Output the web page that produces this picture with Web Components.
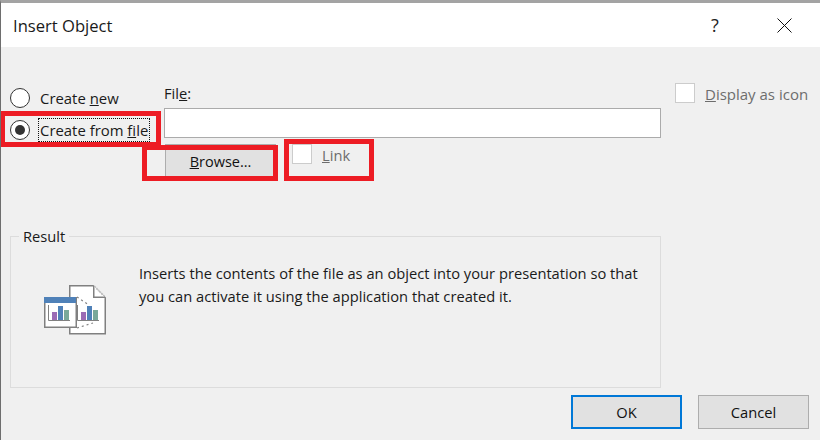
<!DOCTYPE html>
<html lang="en">
<head>
<meta charset="UTF-8">
<title>Insert Object</title>
<style>
    html, body { margin: 0; padding: 0; background: #f0f0f0; }
    body { font: 14.7px "Open Sans", "Noto Sans", sans-serif; color: #1a1a1a; }
</style>
</head>
<body>
<insert-dialog></insert-dialog>

<script>
    class WinRadio extends HTMLElement {
        constructor() {
            super();
            this.attachShadow({mode: 'open'});
            const on = this.hasAttribute('checked');
            const focus = this.hasAttribute('focused');
            this.shadowRoot.innerHTML = `
                <style>
                    :host { display: flex; align-items: center; height: 24px; font-size: 14.9px; }
                    .dot { box-sizing: border-box; width: 20px; height: 20px; border: 1px solid #333; border-radius: 50%;
                        background: #fff; display: flex; align-items: center; justify-content: center; margin-right: 8px; flex: none; }
                    .dot i { width: 10px; height: 10px; border-radius: 50%; background: #333; }
                    .label { padding: 2px 1px; white-space: nowrap; border: 1px solid transparent; line-height: 18px; }
                    .focus { border: 1px dotted #111; }
                </style>
                <span class="dot">${on ? '<i></i>' : ''}</span>
                <span class="label ${focus ? 'focus' : ''}"><slot></slot></span>`;
        }
    }

    class WinCheck extends HTMLElement {
        constructor() {
            super();
            this.attachShadow({mode: 'open'});
            this.shadowRoot.innerHTML = `
                <style>
                    :host { display: flex; align-items: center; height: 20px; color: #6d6d6d; gap: 10px; white-space: nowrap; }
                    span { box-sizing: border-box; width: 20px; height: 20px; background: #fff; border: 1px solid #cccccc; flex: none; }
                    ::slotted(span) { padding-top: 2px; }
                </style>
                <span></span><slot></slot>`;
        }
    }

    class WinButton extends HTMLElement {
        constructor() {
            super();
            this.attachShadow({mode: 'open'});
            this.shadowRoot.innerHTML = `
                <style>
                    :host { box-sizing: border-box; display: flex; align-items: center; justify-content: center;
                        width: 111px; height: 34px; background: #e1e1e1; border: 1px solid #adadad; color: #111; }
                    :host([default]) { border: 2px solid #0078d7; }
                </style>
                <slot></slot>`;
        }
    }

    class ResultBox extends HTMLElement {
        constructor() {
            super();
            this.attachShadow({mode: 'open'});
            this.shadowRoot.innerHTML = `
                <style>
                    :host { display: block; box-sizing: border-box; width: 651px; height: 152px; position: relative;
                        border: 1px solid #dcdcdc; padding: 25px 20px 0 33px; }
                    .legend { position: absolute; left: 8px; top: -11px; padding: 0 4px; background: #f0f0f0; line-height: 20px; }
                    .row { display: flex; gap: 33px; }
                    .icon { flex: none; margin-top: 23px; }
                    p { margin: 0; line-height: 23px; width: 510px; }
                </style>
                <div class="legend">Result</div>
                <div class="row">
                    <div class="icon"><slot name="icon"></slot></div>
                    <p><slot></slot></p>
                </div>`;
        }
    }

    class InsertDialog extends HTMLElement {
        constructor() {
            super();
            this.attachShadow({mode: 'open'});
            this.shadowRoot.innerHTML = `
                <style>
                    :host { display: block; box-sizing: border-box; width: 820px; height: 440px; position: relative; overflow: hidden;
                        background: #f0f0f0; border-top: 3px solid #a3a3a3; border-left: 1px solid #6e6e6e; }
                    header { height: 44px; background: #fff; display: flex; align-items: center; padding-left: 12px; font-size: 16.6px; }
                    header .title { flex: 1; color: #1a1a1a; }
                    .help { width: 22px; text-align: center; font-size: 18px; margin-right: 51px; color: #222; }
                    .close { margin-right: 28px; width: 15px; height: 15px; }
                    .top { display: flex; padding: 33px 0 0 9px; height: 156px; box-sizing: border-box; }
                    .radios { width: 154px; padding-top: 6px; display: flex; flex-direction: column; gap: 8px; }
                    .file { width: 497px; }
                    .file label { display: block; line-height: 20px; height: 28px; margin-top: 3px; margin-bottom: -3px; }
                    .input { box-sizing: border-box; height: 30px; background: #fff; border: 1px solid #ababab; }
                    .actions { display: flex; margin-top: 6px; padding-left: 1px; align-items: flex-start; }
                    .link { margin-left: 16px; }
                    .side { margin-left: 14px; padding-top: 3px; font-size: 15px; }
                    .result { margin: 33px 0 0 9px; }
                    footer { display: flex; justify-content: flex-end; gap: 16px; padding: 7px 11px 0 0; }
                    .mark { position: absolute; box-sizing: border-box; border: 5px solid #ed1c24; pointer-events: none; }
                    .browse { font-size: 14.5px; }
                </style>
                <header>
                    <span class="title">Insert Object</span>
                    <span class="help">?</span>
                    <svg class="close" viewBox="0 0 15 15"><path d="M.5.5l14 14M14.500.5l-14 14" stroke="#111" fill="none"/></svg>
                </header>
                <div class="top">
                    <div class="radios">
                        <win-radio>Create <u>n</u>ew</win-radio>
                        <win-radio checked focused>Create from <u>f</u>ile</win-radio>
                    </div>
                    <div class="file">
                        <label>Fil<u>e</u>:</label>
                        <div class="input"></div>
                        <div class="actions">
                            <win-button class="browse"><span><u>B</u>rowse...</span></win-button>
                            <win-check class="link"><span><u>L</u>ink</span></win-check>
                        </div>
                    </div>
                    <div class="side">
                        <win-check><span><u>D</u>isplay as icon</span></win-check>
                    </div>
                </div>
                <div class="result">
                    <result-box>
                        <svg slot="icon" width="62" height="50" viewBox="0 0 62 50" style="display:block">
                            <path d="M25.750.75H49L61.250 12.750V48.750H25.750z" fill="#fff" stroke="#808080" stroke-width="1.500"/>
                            <path d="M49.750.75V12.250H61" fill="#fff" stroke="#808080" stroke-width="1.500"/>
                            <path d="M50.500 1.500l10 10" stroke="#c4c4c4" stroke-width="2" stroke-dasharray="1.500 1" fill="none"/>
                            <path d="M33 12l12 8M33 43l16-5" stroke="#808080" stroke-width="1.200" stroke-dasharray="2 3" fill="none"/>
                            <rect x=".75" y="12.750" width="31.500" height="29.500" fill="#fff" stroke="#808080" stroke-width="1.500"/>
                            <rect x="0" y="12" width="32" height="6" fill="#4f81b8"/>
                            <path d="M4.500 20v15.500H26" fill="none" stroke="#808080"/>
                            <rect x="8" y="27" width="5" height="8" fill="#9b6bb5"/>
                            <rect x="14" y="21" width="5" height="14" fill="#4f81b8"/>
                            <rect x="20" y="25" width="5" height="10" fill="#79a99a"/>
                            <path d="M33.500 20v15.500H55" fill="none" stroke="#808080"/>
                            <rect x="37" y="27" width="5" height="8" fill="#9b6bb5"/>
                            <rect x="43" y="21" width="5" height="14" fill="#4f81b8"/>
                            <rect x="49" y="25" width="5" height="10" fill="#79a99a"/>
                        </svg>
                        Inserts the contents of the file as an object into your presentation so that you can activate it using the application that created it.
                    </result-box>
                </div>
                <footer>
                    <win-button default>OK</win-button>
                    <win-button>Cancel</win-button>
                </footer>
                <div class="mark" style="left:-1px;top:108px;width:161px;height:36px"></div>
                <div class="mark" style="left:141px;top:142px;width:136px;height:36px"></div>
                <div class="mark" style="left:283px;top:136px;width:90px;height:42px"></div>`;
        }
    }

    customElements.define('win-radio', WinRadio);
    customElements.define('win-check', WinCheck);
    customElements.define('win-button', WinButton);
    customElements.define('result-box', ResultBox);
    customElements.define('insert-dialog', InsertDialog);
</script>
</body>
</html>
